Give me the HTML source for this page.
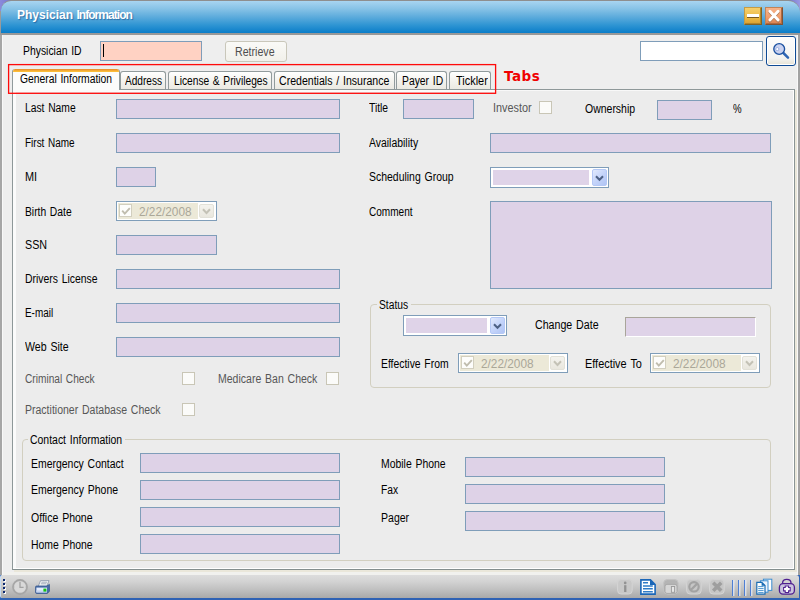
<!DOCTYPE html>
<html lang="en"><head><meta charset="utf-8"><title>Physician Information</title>
<style>
html,body{margin:0;padding:0}
body{width:800px;height:600px;overflow:hidden;position:relative;background:#eeeeee;font:11px "Liberation Sans", sans-serif;color:#000}
.a{position:absolute}
.l{position:absolute;white-space:nowrap;font:12px "Liberation Sans", sans-serif;line-height:14px;color:#000;transform-origin:0 0;word-spacing:1px}
.l.g{color:#575757}
.l.g2{color:#4e4e4e}
.l.d{color:#aaa798;font-size:12px}
.in{position:absolute;box-sizing:border-box;border:1px solid #7f9db9;background:#ded2e7}
.cb{position:absolute;box-sizing:border-box;width:13px;height:13px;border:1px solid #c9c6b6;background:#fbfbf9}
.gb{position:absolute;box-sizing:border-box;border:1px solid #d2cfc0;border-radius:4px}
.tab{position:absolute;box-sizing:border-box;top:71px;height:18px;border:1px solid #919b9c;border-bottom:none;border-radius:3px 3px 0 0;background:linear-gradient(#ffffff,#f4f3ee 50%,#ebe9e2)}
.dp{position:absolute;box-sizing:border-box;height:20px;border:1px solid #7f9db9;background:#fff}
.dp i{position:absolute;left:1px;top:1px;right:18px;bottom:1px;background:#ece9d8}
.dp b{position:absolute;box-sizing:border-box;left:2px;top:2px;width:13px;height:13px;border:1px solid #d2cfbf;background:#fdfdfb}
.dp u{position:absolute;box-sizing:border-box;right:2px;top:2px;width:15px;height:14px;border:1px solid #e2e1d8;border-radius:2px;background:linear-gradient(#f4f3ee,#e9e7de)}
.co{position:absolute;box-sizing:border-box;height:21px;border:1px solid #7f9db9;background:#fff}
.co i{position:absolute;left:2px;top:2px;right:19px;bottom:2px;background:#dfd3e8}
.co u{position:absolute;box-sizing:border-box;right:1px;top:1px;width:15px;height:17px;border:1px solid #b4c8f6;border-radius:2px;background:linear-gradient(135deg,#e2eafd,#c4d4fa 50%,#b0c4f4)}
svg{position:absolute;overflow:visible}
</style></head><body>
<div class="a" style="left:0;top:0;width:800px;height:14px;background:linear-gradient(90deg,#8a8adc 0,#7474cc 12px,#7474cc 788px,#9a9ae4 800px)"></div>
<div class="a" style="left:0;top:11px;width:1px;height:24px;background:#9a9a9a"></div>
<div class="a" style="left:1px;top:0;width:799px;height:35px;box-sizing:border-box;border-top:1px solid #8e8e8e;border-radius:10px 12px 0 0;background:linear-gradient(#a9d6f2 0,#a4d2ef 1px,#86c2e6 8px,#5cabdc 16px,#2f95d3 24px,#0a7dc9 32px,#989898 32px,#989898 34px);"></div>
<div class="a" style="left:0;top:35px;width:2px;height:540px;background:#a6a6a6"></div>
<div class="a" style="left:2px;top:35px;width:1px;height:540px;background:#f8f8f8"></div>
<div class="a" style="left:798px;top:35px;width:2px;height:540px;background:#a2a2a2"></div>
<div class="a" style="left:797px;top:35px;width:1px;height:540px;background:#f8f8f8"></div>
<div class="a" style="left:17px;top:8px;font:bold 12px 'Liberation Sans', sans-serif;line-height:14px;color:#fff;white-space:nowrap;text-shadow:1px 1px 1px rgba(20,70,130,.55)"><span style="letter-spacing:0">Physician</span> <span style="letter-spacing:-0.95px">Information</span></div>
<div class="a" style="left:744px;top:7px;width:18px;height:18px;box-sizing:border-box;border:1px solid #7e6226;border-top-color:#c49c46;border-left-color:#c49c46;background:linear-gradient(#f6cf6c,#ecba44 60%,#d8a030);box-shadow:inset -1px -1px 0 #b08428"></div>
<div class="a" style="left:747px;top:14px;width:12px;height:3px;background:#fff;box-shadow:0 1px 0 #7a5a20"></div>
<div class="a" style="left:765px;top:7px;width:18px;height:18px;box-sizing:border-box;border:1px solid #7e5236;border-top-color:#c08458;border-left-color:#c08458;background:linear-gradient(#f6b38a,#ee9c6c 60%,#d88252);box-shadow:inset -1px -1px 0 #b06a40"></div>
<svg style="left:765px;top:7px" width="18" height="18" viewBox="0 0 18 18"><path d="M4.9 5.1L13.1 13.8M13.1 5.1L4.9 13.8" stroke="#6a4a30" stroke-width="3" stroke-linecap="round" opacity=".55"/><path d="M4.9 4.3L13.1 13M13.1 4.3L4.9 13" stroke="#fff" stroke-width="3" stroke-linecap="round"/></svg>
<div class="in" style="left:100px;top:41px;width:102px;height:20px;background:#ffd2c3"></div>
<div class="a" style="left:103px;top:44px;width:1px;height:13px;background:#000"></div>
<div class="a" style="left:225px;top:41px;width:62px;height:21px;box-sizing:border-box;border:1px solid #c9c7ba;border-radius:3px;background:linear-gradient(#fafaf7,#f1f0ea)"></div>
<div class="in" style="left:640px;top:41px;width:123px;height:20px;background:#fff"></div>
<div class="a" style="left:766px;top:36px;width:30px;height:30px;box-sizing:border-box;border:1px solid #0f4a94;border-radius:3px;background:linear-gradient(#fdfdfd,#f4f4f2 75%,#e6e2d4);box-shadow:inset 0 0 0 1px #fff"></div>
<svg style="left:766px;top:36px" width="30" height="30" viewBox="0 0 30 30"><path d="M17.4 17L22 21.6" stroke="#2f66b4" stroke-width="2.5" stroke-linecap="round"/><circle cx="13.2" cy="13" r="5.4" fill="#cad2f0" stroke="#1a50a0" stroke-width="1.35"/><circle cx="11.3" cy="13.1" r="1.6" fill="#fff" stroke="#93a8de" stroke-width=".9"/></svg>
<div class="a" style="left:12px;top:89px;width:783px;height:481px;box-sizing:border-box;border:1px solid #8e9899;border-right-color:#8a9494;border-bottom-color:#838e8e;background:#ececec;box-shadow:inset -1px -1px 0 #fff,inset 3px 0 0 #fbfbfb,inset 0 1px 0 #f8f8f8"></div>
<div class="a" style="left:795px;top:90px;width:2px;height:482px;background:#eae7da"></div>
<div class="a" style="left:14px;top:570px;width:783px;height:2px;background:#eae7da"></div>
<div class="a" style="left:3px;top:572px;width:794px;height:3px;background:#f1f1ee"></div>
<div class="tab" style="left:120px;width:46px"></div>
<div class="tab" style="left:168px;width:104px"></div>
<div class="tab" style="left:274px;width:121px"></div>
<div class="tab" style="left:396px;width:51px"></div>
<div class="tab" style="left:449px;width:42px"></div>
<div class="a" style="left:12px;top:69px;width:108px;height:22px;box-sizing:border-box;border:1px solid #919b9c;border-bottom:none;border-top:none;border-radius:3px 3px 0 0;background:#fcfcfb;overflow:hidden"><div class="a" style="left:-1px;right:-1px;top:0;height:3px;background:linear-gradient(#e68b2c,#ffc73c);border-radius:3px 3px 0 0"></div></div>
<div class="a" style="left:13px;top:90px;width:482px;height:2px;background:#fafafa"></div>
<svg style="left:0;top:0" width="800" height="100"><rect x="8.6" y="64.6" width="487" height="28.7" fill="none" stroke="#ff0a0a" stroke-width="1.3"/></svg>
<div class="a" style="left:504px;top:69px;font:bold 13.5px 'DejaVu Sans',sans-serif;line-height:15px;color:#f00000;white-space:nowrap;letter-spacing:0.5px">Tabs</div>
<div class="in" style="left:116px;top:99px;width:224px;height:20px"></div>
<div class="in" style="left:116px;top:133px;width:224px;height:20px"></div>
<div class="in" style="left:116px;top:167px;width:40px;height:20px"></div>
<div class="in" style="left:116px;top:235px;width:101px;height:20px"></div>
<div class="in" style="left:116px;top:269px;width:224px;height:20px"></div>
<div class="in" style="left:116px;top:303px;width:224px;height:20px"></div>
<div class="in" style="left:116px;top:337px;width:224px;height:20px"></div>
<div class="in" style="left:403px;top:99px;width:71px;height:20px"></div>
<div class="in" style="left:657px;top:100px;width:55px;height:20px"></div>
<div class="in" style="left:490px;top:133px;width:281px;height:20px"></div>
<div class="in" style="left:490px;top:201px;width:282px;height:88px"></div>
<div class="in" style="left:140px;top:453px;width:200px;height:20px"></div>
<div class="in" style="left:140px;top:480px;width:200px;height:20px"></div>
<div class="in" style="left:140px;top:507px;width:200px;height:20px"></div>
<div class="in" style="left:140px;top:534px;width:200px;height:20px"></div>
<div class="in" style="left:465px;top:457px;width:200px;height:20px"></div>
<div class="in" style="left:465px;top:484px;width:200px;height:20px"></div>
<div class="in" style="left:465px;top:511px;width:200px;height:20px"></div>
<div class="a" style="left:625px;top:317px;width:131px;height:20px;box-sizing:border-box;border:1px solid #a9a59a;border-right-color:#fff;border-bottom-color:#fff;background:#dfd3e8"></div>
<div class="cb" style="left:182px;top:372px"></div>
<div class="cb" style="left:326px;top:372px"></div>
<div class="cb" style="left:182px;top:403px"></div>
<div class="cb" style="left:539px;top:101px"></div>
<div class="gb" style="left:370px;top:304px;width:401px;height:84px"></div>
<div class="a" style="left:377px;top:300px;width:34px;height:10px;background:#ececec"></div>
<div class="gb" style="left:22px;top:439px;width:749px;height:122px"></div>
<div class="a" style="left:28px;top:435px;width:97px;height:10px;background:#ececec"></div>
<div class="dp" style="left:116px;top:201px;width:101px"><i></i><b></b><u></u><svg style="left:4px;top:4.5px" width="10" height="9" viewBox="0 0 10 9"><path d="M1.2 3.6L3.8 6.6L8.8 1.2" fill="none" stroke="#c0bdae" stroke-width="1.9"/></svg><svg style="right:5px;top:5.5px" width="9" height="7" viewBox="0 0 9 7"><path d="M1 1.2L4.5 5L8 1.2" fill="none" stroke="#c4c2b6" stroke-width="2"/></svg></div>
<div class="dp" style="left:458px;top:353px;width:110px"><i></i><b></b><u></u><svg style="left:4px;top:4.5px" width="10" height="9" viewBox="0 0 10 9"><path d="M1.2 3.6L3.8 6.6L8.8 1.2" fill="none" stroke="#c0bdae" stroke-width="1.9"/></svg><svg style="right:5px;top:5.5px" width="9" height="7" viewBox="0 0 9 7"><path d="M1 1.2L4.5 5L8 1.2" fill="none" stroke="#c4c2b6" stroke-width="2"/></svg></div>
<div class="dp" style="left:650px;top:353px;width:110px"><i></i><b></b><u></u><svg style="left:4px;top:4.5px" width="10" height="9" viewBox="0 0 10 9"><path d="M1.2 3.6L3.8 6.6L8.8 1.2" fill="none" stroke="#c0bdae" stroke-width="1.9"/></svg><svg style="right:5px;top:5.5px" width="9" height="7" viewBox="0 0 9 7"><path d="M1 1.2L4.5 5L8 1.2" fill="none" stroke="#c4c2b6" stroke-width="2"/></svg></div>
<div class="co" style="left:490px;top:167px;width:119px"><i></i><u></u><svg style="right:4.5px;top:6.5px" width="9" height="7" viewBox="0 0 9 7"><path d="M1 1.2L4.5 4.8L8 1.2" fill="none" stroke="#4d6185" stroke-width="2"/></svg></div>
<div class="co" style="left:403px;top:315px;width:104px"><i></i><u></u><svg style="right:4.5px;top:6.5px" width="9" height="7" viewBox="0 0 9 7"><path d="M1 1.2L4.5 4.8L8 1.2" fill="none" stroke="#4d6185" stroke-width="2"/></svg></div>
<span class="l " id="L0" style="left:22.75px;top:44px;transform:scaleX(0.8655)">Physician ID</span>
<span class="l " id="L1" style="left:24.75px;top:101px;transform:scaleX(0.8572)">Last Name</span>
<span class="l " id="L2" style="left:24.75px;top:136px;transform:scaleX(0.8312)">First Name</span>
<span class="l " id="L3" style="left:24.75px;top:170px;transform:scaleX(0.9068)">MI</span>
<span class="l " id="L4" style="left:24.75px;top:205px;transform:scaleX(0.8573)">Birth Date</span>
<span class="l " id="L5" style="left:24.75px;top:238px;transform:scaleX(0.8952)">SSN</span>
<span class="l " id="L6" style="left:24.75px;top:272px;transform:scaleX(0.8674)">Drivers License</span>
<span class="l " id="L7" style="left:24.75px;top:306px;transform:scaleX(0.8261)">E-mail</span>
<span class="l " id="L8" style="left:24.75px;top:340px;transform:scaleX(0.8814)">Web Site</span>
<span class="l g" id="L9" style="left:24.75px;top:372px;transform:scaleX(0.8451)">Criminal Check</span>
<span class="l g" id="L10" style="left:218px;top:372px;transform:scaleX(0.8762)">Medicare Ban Check</span>
<span class="l g" id="L11" style="left:24.75px;top:403px;transform:scaleX(0.8763)">Practitioner Database Check</span>
<span class="l " id="L12" style="left:30.25px;top:433px;transform:scaleX(0.8712)">Contact Information</span>
<span class="l " id="L13" style="left:30.75px;top:457px;transform:scaleX(0.8704)">Emergency Contact</span>
<span class="l " id="L14" style="left:30.75px;top:483px;transform:scaleX(0.8733)">Emergency Phone</span>
<span class="l " id="L15" style="left:30.75px;top:511px;transform:scaleX(0.8778)">Office Phone</span>
<span class="l " id="L16" style="left:30.75px;top:538px;transform:scaleX(0.8670)">Home Phone</span>
<span class="l " id="L17" style="left:369.25px;top:101px;transform:scaleX(0.8590)">Title</span>
<span class="l g" id="L18" style="left:492.75px;top:101px;transform:scaleX(0.9042)">Investor</span>
<span class="l " id="L19" style="left:585.25px;top:102px;transform:scaleX(0.8734)">Ownership</span>
<span class="l " id="L20" style="left:732.75px;top:102px;transform:scaleX(0.8059)">%</span>
<span class="l " id="L21" style="left:368.75px;top:136px;transform:scaleX(0.8693)">Availability</span>
<span class="l " id="L22" style="left:368.75px;top:170px;transform:scaleX(0.8715)">Scheduling Group</span>
<span class="l " id="L23" style="left:368.75px;top:205px;transform:scaleX(0.8382)">Comment</span>
<span class="l " id="L24" style="left:379.25px;top:298px;transform:scaleX(0.8551)">Status</span>
<span class="l " id="L25" style="left:534.75px;top:318px;transform:scaleX(0.8868)">Change Date</span>
<span class="l " id="L26" style="left:380.75px;top:357px;transform:scaleX(0.8651)">Effective From</span>
<span class="l " id="L27" style="left:585.25px;top:357px;transform:scaleX(0.9090)">Effective To</span>
<span class="l " id="L28" style="left:380.75px;top:457px;transform:scaleX(0.8684)">Mobile Phone</span>
<span class="l " id="L29" style="left:380.75px;top:483px;transform:scaleX(0.8543)">Fax</span>
<span class="l " id="L30" style="left:380.75px;top:511px;transform:scaleX(0.8773)">Pager</span>
<span class="l g2" id="L31" style="left:235.25px;top:45px;transform:scaleX(0.8862)">Retrieve</span>
<span class="l " id="L32" style="left:19.55px;top:72px;transform:scaleX(0.8602)">General Information</span>
<span class="l " id="L33" style="left:124.5px;top:74px;transform:scaleX(0.8426)">Address</span>
<span class="l " id="L34" style="left:174.25px;top:74px;transform:scaleX(0.8504)">License &amp; Privileges</span>
<span class="l " id="L35" style="left:279.25px;top:74px;transform:scaleX(0.8799)">Credentials / Insurance</span>
<span class="l " id="L36" style="left:401.75px;top:74px;transform:scaleX(0.8619)">Payer ID</span>
<span class="l " id="L37" style="left:455.5px;top:74px;transform:scaleX(0.9129)">Tickler</span>
<span class="l d" id="L38" style="left:138.5px;top:205px;transform:scaleX(0.9852)">2/22/2008</span>
<span class="l d" id="L39" style="left:480.5px;top:357px;transform:scaleX(0.9852)">2/22/2008</span>
<span class="l d" id="L40" style="left:672.5px;top:357px;transform:scaleX(0.9852)">2/22/2008</span>
<div class="a" style="left:0;top:575px;width:800px;height:25px;background:#2f62b4"></div>
<div class="a" style="left:0;top:575px;width:798.5px;height:23px;box-sizing:border-box;border-left:1px solid #c6dcf4;border-radius:2px 3px 0 2px;background:linear-gradient(#dddddd,#d2d2d2 30%,#bcbcbc 70%,#a9a9a9)"></div>
<div class="a" style="left:3px;top:579px;width:2px;height:2px;background:#0c2a72;box-shadow:1px 1px 0 #fff"></div>
<div class="a" style="left:3px;top:583px;width:2px;height:2px;background:#0c2a72;box-shadow:1px 1px 0 #fff"></div>
<div class="a" style="left:3px;top:587px;width:2px;height:2px;background:#0c2a72;box-shadow:1px 1px 0 #fff"></div>
<div class="a" style="left:3px;top:591px;width:2px;height:2px;background:#0c2a72;box-shadow:1px 1px 0 #fff"></div>
<svg style="left:12px;top:579px" width="16" height="16" viewBox="0 0 16 16"><circle cx="8" cy="8" r="7" fill="#d9d9d9" stroke="#a6a6a6" stroke-width="1.8"/><path d="M8 3V8.3H11.6" fill="none" stroke="#a2a2a2" stroke-width="1.3"/><path d="M8 1.6V2.6M8 13.4V14.4M1.6 8H2.6M13.4 8H14.4" stroke="#b4b4b4" stroke-width="1"/></svg>
<svg style="left:35px;top:580px" width="15" height="14" viewBox="0 0 15 14"><path d="M3.2 6.4L5.6 .6H14L11.6 6.4Z" fill="#f6f6f6" stroke="#8a96aa" stroke-width=".8"/><path d="M6.4 2.2H12M5.8 3.8H11.4" stroke="#a4aebe" stroke-width="1"/><path d="M.6 7Q.6 6 1.6 6H11.8L14.4 4.4V11.2L12.4 13.4H1.6Q.6 13.4 .6 12.4Z" fill="#4a6ea8" stroke="#34558e" stroke-width=".8"/><path d="M1.4 7.6H12V12.4H1.4Z" fill="#e4ecfb"/><path d="M1.4 10.4H12V12.4H1.4Z" fill="#c4d4f2"/><rect x="8.4" y="8.6" width="3" height="3" fill="#14c414"/></svg>
<svg style="left:617px;top:579px" width="16" height="16" viewBox="0 0 16 16"><rect x=".6" y=".6" width="14.6" height="14.4" rx="3.5" fill="#c8c8c8" stroke="#d4d4d4" stroke-width="1"/><circle cx="8.2" cy="3.9" r="1.35" fill="#929292"/><rect x="7.1" y="6.2" width="2.3" height="6.8" fill="#929292"/></svg>
<svg style="left:640px;top:579px" width="16" height="16" viewBox="0 0 16 16"><path d="M.9 .9H10.4L15.1 5.6V15.1H.9Z" fill="#fff" stroke="#1a66b8" stroke-width="1.6"/><path d="M10 .6V6H15.4Z" fill="#1a66b8"/><path d="M3 3.8H8M3 6.9H12.8M3 9.8H12.8M3 12.7H12.8" stroke="#2f7cc8" stroke-width="1.5"/></svg>
<svg style="left:663px;top:579px" width="16" height="16" viewBox="0 0 16 16"><rect x=".6" y=".6" width="14.6" height="14.4" rx="3.8" fill="#b4b4b4" stroke="#c4c4c4" stroke-width="1"/><rect x="2" y="5.4" width="12" height="9" rx="2" fill="#d6d6d6" stroke="#a6a6a6" stroke-width=".9"/><rect x="8.4" y="7.5" width="3.2" height="5.8" fill="#e6e6e6" stroke="#989898" stroke-width=".9"/></svg>
<svg style="left:686px;top:579px" width="16" height="16" viewBox="0 0 16 16"><rect x=".6" y=".6" width="14.6" height="14.4" rx="3.5" fill="#c6c6c6" stroke="#d4d4d4" stroke-width="1"/><circle cx="8" cy="7.8" r="4.7" fill="none" stroke="#a2a2a2" stroke-width="2.2"/><path d="M4.8 11L11.2 4.6" stroke="#a2a2a2" stroke-width="2.2"/></svg>
<svg style="left:709px;top:579px" width="16" height="16" viewBox="0 0 16 16"><rect x=".6" y=".6" width="14.6" height="14.4" rx="3.5" fill="#c6c6c6" stroke="#d4d4d4" stroke-width="1"/><path d="M4.2 3.8L12.2 11.8M12.2 3.8L4.2 11.8" stroke="#9e9e9e" stroke-width="3.6"/></svg>
<svg style="left:732px;top:580px" width="22" height="16" viewBox="0 0 22 16"><path d="M.7 0V16M6.7 0V16M12.7 0V16M18.7 0V16" stroke="#4a7cd4" stroke-width="1.3"/><path d="M1.8 0V16M7.8 0V16M13.8 0V16M19.8 0V16" stroke="#f6f8fc" stroke-width="1"/></svg>
<svg style="left:756px;top:578px" width="17" height="17" viewBox="0 0 17 17"><rect x="7.4" y="1.2" width="8.4" height="11.2" fill="#fff" stroke="#3a8cd0" stroke-width="1"/><rect x="4.4" y="2.8" width="7.6" height="11.4" fill="#eef4fc" stroke="#3a8cd0" stroke-width="1"/><path d="M.8 4.4H5.8L9 7.6V16.2H.8Z" fill="#fff" stroke="#1a6cb4" stroke-width="1.2"/><path d="M5.6 4V7.8H9.4Z" fill="#1a6cb4"/><path d="M2.2 8.6H7.6M2.2 10.6H7.6M2.2 12.6H7.6M2.2 14.6H7.6" stroke="#4a94d0" stroke-width="1"/></svg>
<svg style="left:778px;top:578px" width="17" height="17" viewBox="0 0 17 17"><path d="M4.6 6V5Q4.6 1.4 8.8 1.4Q13 1.4 13 5V6" fill="none" stroke="#4f1f90" stroke-width="1.3"/><rect x="1.4" y="5.6" width="15" height="10.6" rx="3.6" fill="#cbc4de" stroke="#4f1f90" stroke-width="1.3"/><path d="M8.9 7.4V15M5.1 11.2H12.7" stroke="#4f1f90" stroke-width="4.4"/><path d="M8.9 8.4V14M6.1 11.2H11.7" stroke="#fff" stroke-width="2.3"/></svg>
</body></html>
